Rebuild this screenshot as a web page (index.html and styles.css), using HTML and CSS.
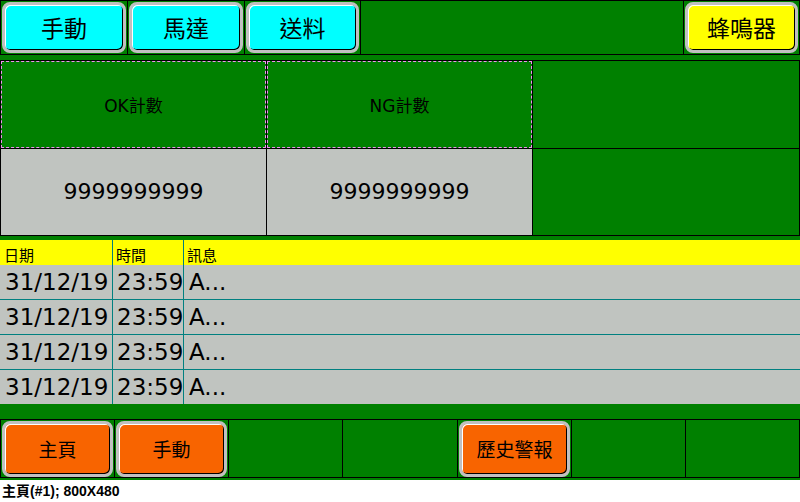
FILE: index.html
```html
<!DOCTYPE html>
<html lang="zh-Hant">
<head>
<meta charset="utf-8">
<title>主頁</title>
<link rel="stylesheet" href="styles.css">
</head>
<body>
<div class="screen">
  <div class="topbar">
    <div class="cell c1"><div class="btn cyan">手動</div></div>
    <div class="cell c2"><div class="btn cyan">馬達</div></div>
    <div class="cell c3"><div class="btn cyan">送料</div></div>
    <div class="cell c4"></div>
    <div class="cell c5 last"><div class="btn yellow">蜂鳴器</div></div>
  </div>

  <div class="counters">
    <div class="chead"><span>OK計數</span></div>
    <div class="chead"><span>NG計數</span></div>
    <div class="cempty"></div>
    <div class="cval">9999999999</div>
    <div class="cval">9999999999</div>
    <div class="cempty"></div>
  </div>

  <div class="alarms">
    <div class="arow head">
      <div class="acell d">日期</div>
      <div class="acell t">時間</div>
      <div class="acell m">訊息</div>
    </div>
    <div class="arow">
      <div class="acell d">31/12/19</div>
      <div class="acell t">23:59</div>
      <div class="acell m">A...</div>
    </div>
    <div class="arow">
      <div class="acell d">31/12/19</div>
      <div class="acell t">23:59</div>
      <div class="acell m">A...</div>
    </div>
    <div class="arow">
      <div class="acell d">31/12/19</div>
      <div class="acell t">23:59</div>
      <div class="acell m">A...</div>
    </div>
    <div class="arow lastrow">
      <div class="acell d">31/12/19</div>
      <div class="acell t">23:59</div>
      <div class="acell m">A...</div>
    </div>
  </div>

  <div class="bottombar">
    <div class="bcell"><div class="btn orange small">主頁</div></div>
    <div class="bcell"><div class="btn orange small">手動</div></div>
    <div class="bcell"></div>
    <div class="bcell wide"></div>
    <div class="bcell"><div class="btn orange small">歷史警報</div></div>
    <div class="bcell"></div>
    <div class="bcell last"></div>
  </div>
</div>
<div class="status">主頁(#1); 800X480</div>
</body>
</html>
```

FILE: styles.css
```css
* { box-sizing: border-box; }

html, body {
  margin: 0;
  padding: 0;
  background: #ffffff;
}

body {
  width: 800px;
  height: 502px;
  overflow: hidden;
  font-family: "DejaVu Sans", "Noto Sans CJK TC", sans-serif;
  color: #000;
}

.screen {
  width: 800px;
  height: 480px;
  background: #008000;
  display: flex;
  flex-direction: column;
}

/* ---------- top bar ---------- */
.topbar {
  display: flex;
  height: 55px;
  border: 1px solid #000;
}

.cell {
  border-right: 1px solid #000;
  padding: 1px;
  display: flex;
}
.cell.last { border-right: 0; }
.c1 { width: 127px; }
.c2 { width: 117px; }
.c3 { width: 116px; }
.c4 { width: 323px; }
.c5 { width: 115px; }

.btn {
  flex: 1;
  display: flex;
  align-items: center;
  justify-content: center;
  border: 3px solid #c0c0c0;
  border-radius: 8px;
  box-shadow: inset 1px 1px 0 #ffffff, inset -1px -1px 0 #000000;
  font-family: "Noto Sans CJK TC", sans-serif;
  font-size: 23px;
  line-height: 1;
  padding-bottom: 1px;
}
.cyan { background: #00ffff; }
.yellow { background: #ffff00; }
.orange { background: #f86400; }
.btn.small { font-size: 19px; }

/* ---------- counters ---------- */
.counters {
  margin-top: 5px;
  display: grid;
  grid-template-columns: 265px 265px 266px;
  grid-template-rows: 87px 86px;
  gap: 1px;
  padding: 1px;
  background: #000;
  width: 800px;
  height: 176px;
}

.chead {
  background: #008000;
  border: 1px dashed #f090f0;
  display: flex;
  align-items: center;
  justify-content: center;
  font-size: 17px;
}
.chead span { padding-bottom: 1px; }

.cempty { background: #008000; }

.cval {
  background: #c0c4c0;
  display: flex;
  align-items: center;
  justify-content: center;
  font-size: 22px;
  padding-bottom: 1px;
}

/* ---------- alarm table ---------- */
.alarms {
  margin-top: 4px;
  display: flex;
  flex-direction: column;
}

.arow {
  display: flex;
  height: 35px;
  background: #c0c4c0;
  border-bottom: 1px solid #008080;
}
.arow.head {
  height: 25px;
  background: #ffff00;
  border-bottom: 0;
}
.arow.lastrow {
  height: 34px;
  border-bottom: 0;
}

.acell {
  display: flex;
  align-items: center;
  font-size: 23px;
  padding-left: 5px;
  white-space: nowrap;
  overflow: hidden;
}
.acell.d { width: 113px; border-right: 1px solid #008080; padding-left: 5px; }
.acell.t { width: 71px; border-right: 1px solid #008080; padding-left: 4px; }
.acell.m { flex: 1; padding-left: 5px; }

.arow.head .acell {
  font-family: "Noto Sans CJK TC", sans-serif;
  font-size: 15px;
  line-height: 1;
  padding-left: 4px;
  align-items: flex-start;
  padding-top: 7px;
}
.arow.head .acell.t,
.arow.head .acell.m { padding-left: 3px; }

/* ---------- bottom bar ---------- */
.bottombar {
  margin-top: 15px;
  display: flex;
  height: 59px;
  border: 1px solid #000;
}

.bcell {
  width: 114px;
  border-right: 1px solid #000;
  padding: 1px 1px 0 1px;
  display: flex;
}
.bcell.wide { width: 115px; }
.bcell.last { width: 113px; border-right: 0; }

/* ---------- status line ---------- */
.status {
  padding: 3px 0 0 2px;
  font-family: "Liberation Sans", "Noto Sans CJK TC", sans-serif;
  font-weight: bold;
  font-size: 14px;
  line-height: 16px;
}
```
